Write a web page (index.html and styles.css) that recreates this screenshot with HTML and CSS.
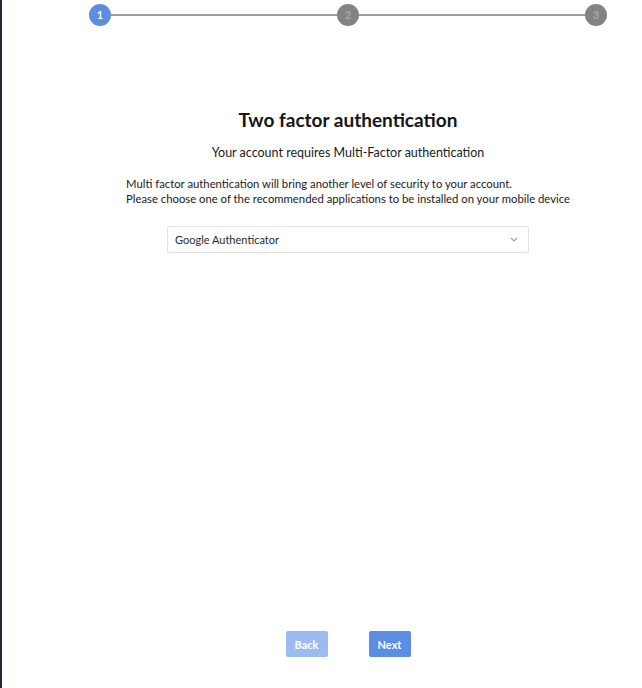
FILE: index.html
```html
<!DOCTYPE html>
<html>
    <head>
        <link rel="stylesheet" href="styles.css">
    </head>
    <body>
        <div class="page">
            <ul class="stepper">
                <li class="step active">1</li>
                <li class="bar"></li>
                <li class="step">2</li>
                <li class="bar"></li>
                <li class="step">3</li>
            </ul>

            <section class="content">
                <h1>Two factor authentication</h1>
                <p class="lead">Your account requires Multi-Factor authentication</p>
                <p class="info">Multi factor authentication will bring another level of security to your account.<br>
                Please choose one of the recommended applications to be installed on your mobile device</p>
                <div class="select">
                    <span>Google Authenticator</span>
                    <svg class="chevron" width="8" height="5" viewBox="0 0 8 5"><path d="M1 1l3 3 3-3" fill="none" stroke="#a0a0a0" stroke-width="1.2"/></svg>
                </div>
            </section>

            <div class="actions">
                <button class="btn disabled">Back</button>
                <button class="btn">Next</button>
            </div>
        </div>
    </body>
</html>
```

FILE: styles.css
```css
    body{
        margin: 0;
        height: 688px;
        background: white;
        border-left: 2px solid #1e2a38;
        overflow: hidden;
        font-family: Lato, "Open Sans", sans-serif;
        color: #1b1b1b;
    }
    .page{
        width: 640px;
        height: 688px;
        display: flex;
        flex-direction: column;
    }
    .stepper{
        list-style: none;
        margin: 4px 0 0 87px;
        padding: 0;
        width: 518px;
        display: flex;
        align-items: center;
    }
    .step{
        width: 22px;
        height: 22px;
        border-radius: 50%;
        background: #838383;
        color: #a9a9a9;
        font-size: 11px;
        font-weight: bold;
        line-height: 22px;
        text-align: center;
    }
    .step.active{
        background: #5b8de2;
        color: white;
    }
    .bar{
        flex: 1;
        height: 2px;
        background: #9c9c9c;
    }
    /* content is centred on step 2, not on the window */
    .content, .actions{
        padding-left: 52px;
    }
    .content{
        display: flex;
        flex-direction: column;
        align-items: center;
        margin-top: 82px;
    }
    h1{
        font-size: 19px;
        font-weight: bold;
        margin: 0;
        color: #151515;
    }
    .lead{
        font-size: 12.5px;
        margin: 14px 0 0 0;
    }
    .info{
        font-size: 11.3px;
        line-height: 15px;
        margin: 16px 0 0 0;
        text-align: left;
    }
    .select{
        box-sizing: border-box;
        width: 362px;
        height: 27px;
        margin-top: 20px;
        padding: 0 10px 0 7px;
        border: 1px solid #e2e2e2;
        border-radius: 2px;
        display: flex;
        align-items: center;
        justify-content: space-between;
        font-size: 11px;
        color: #2a2a2a;
    }
    .actions{
        margin-top: auto;
        margin-bottom: 31px;
        display: flex;
        justify-content: center;
        gap: 41px;
    }
    .btn{
        width: 42px;
        height: 26px;
        border: 0;
        border-radius: 2px;
        background: #5b8de2;
        color: white;
        font-family: Lato, "Open Sans", sans-serif;
        font-size: 11px;
        font-weight: bold;
        padding: 0;
    }
    .btn.disabled{
        background: #9cbcef;
    }
```
